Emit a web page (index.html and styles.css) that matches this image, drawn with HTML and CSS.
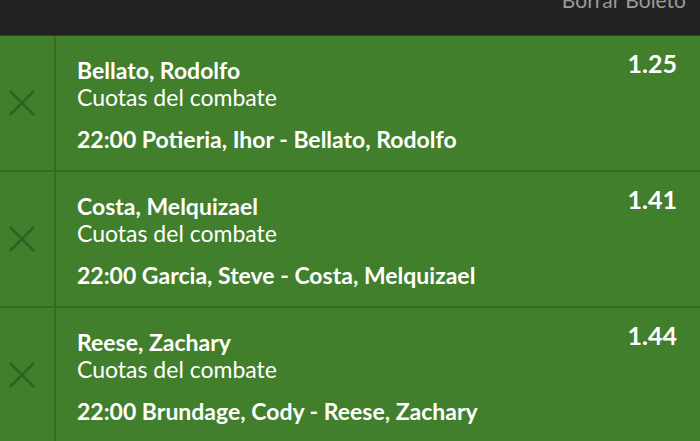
FILE: index.html
```html
<!DOCTYPE html>
<html lang="es">
<head>
<meta charset="utf-8">
<link rel="stylesheet" href="styles.css">
</head>
<body>
<div class="header"><span class="clear">Borrar Boleto</span></div>
<div class="list">
  <div class="row">
    <div class="remove"><svg width="26" height="26" viewBox="0 0 26 26"><path d="M1 1L25 25M25 1L1 25" stroke="currentColor" stroke-width="2.6" fill="none"/></svg></div>
    <div class="info">
      <div class="name">Bellato, Rodolfo</div>
      <div class="market">Cuotas del combate</div>
      <div class="event">22:00 Potieria, Ihor - Bellato, Rodolfo</div>
    </div>
    <div class="odds">1.25</div>
  </div>
  <div class="row">
    <div class="remove"><svg width="26" height="26" viewBox="0 0 26 26"><path d="M1 1L25 25M25 1L1 25" stroke="currentColor" stroke-width="2.6" fill="none"/></svg></div>
    <div class="info">
      <div class="name">Costa, Melquizael</div>
      <div class="market">Cuotas del combate</div>
      <div class="event">22:00 Garcia, Steve - Costa, Melquizael</div>
    </div>
    <div class="odds">1.41</div>
  </div>
  <div class="row">
    <div class="remove"><svg width="26" height="26" viewBox="0 0 26 26"><path d="M1 1L25 25M25 1L1 25" stroke="currentColor" stroke-width="2.6" fill="none"/></svg></div>
    <div class="info">
      <div class="name">Reese, Zachary</div>
      <div class="market">Cuotas del combate</div>
      <div class="event">22:00 Brundage, Cody - Reese, Zachary</div>
    </div>
    <div class="odds">1.44</div>
  </div>
</div>
</body>
</html>
```
FILE: styles.css
```css
html, body {
  margin: 0;
  padding: 0;
  background: #417f2c;
  font-family: Lato, "Open Sans", sans-serif;
  overflow: hidden;
}
.header {
  height: 35px;
  background: #222222;
  border-bottom: 1px solid #2e3a2a;
  display: flex;
  justify-content: flex-end;
  align-items: flex-start;
  padding-right: 14px;
  overflow: hidden;
}
.clear {
  color: #9a9a9a;
  font-size: 21px;
  line-height: 24px;
  margin-top: -12px;
}
.list {
  display: flex;
  flex-direction: column;
}
.row {
  height: 134px;
  display: flex;
  border-bottom: 2px solid #356b24;
  color: #ffffff;
}
.remove {
  width: 56px;
  flex: none;
  box-sizing: border-box;
  border-right: 2px solid #356b24;
  display: flex;
  align-items: center;
  padding-left: 9px;
  color: #2f6322;
}
.remove svg {
  display: block;
}
.info {
  flex: 1;
  padding: 21px 0 0 21px;
}
.name {
  font-size: 23px;
  line-height: 27px;
  font-weight: 700;
}
.market {
  font-size: 23px;
  line-height: 27px;
}
.event {
  font-size: 23px;
  line-height: 27px;
  font-weight: 700;
  margin-top: 15px;
}
.odds {
  font-size: 25px;
  line-height: 29px;
  font-weight: 700;
  padding: 13px 23px 0 0;
}
```
